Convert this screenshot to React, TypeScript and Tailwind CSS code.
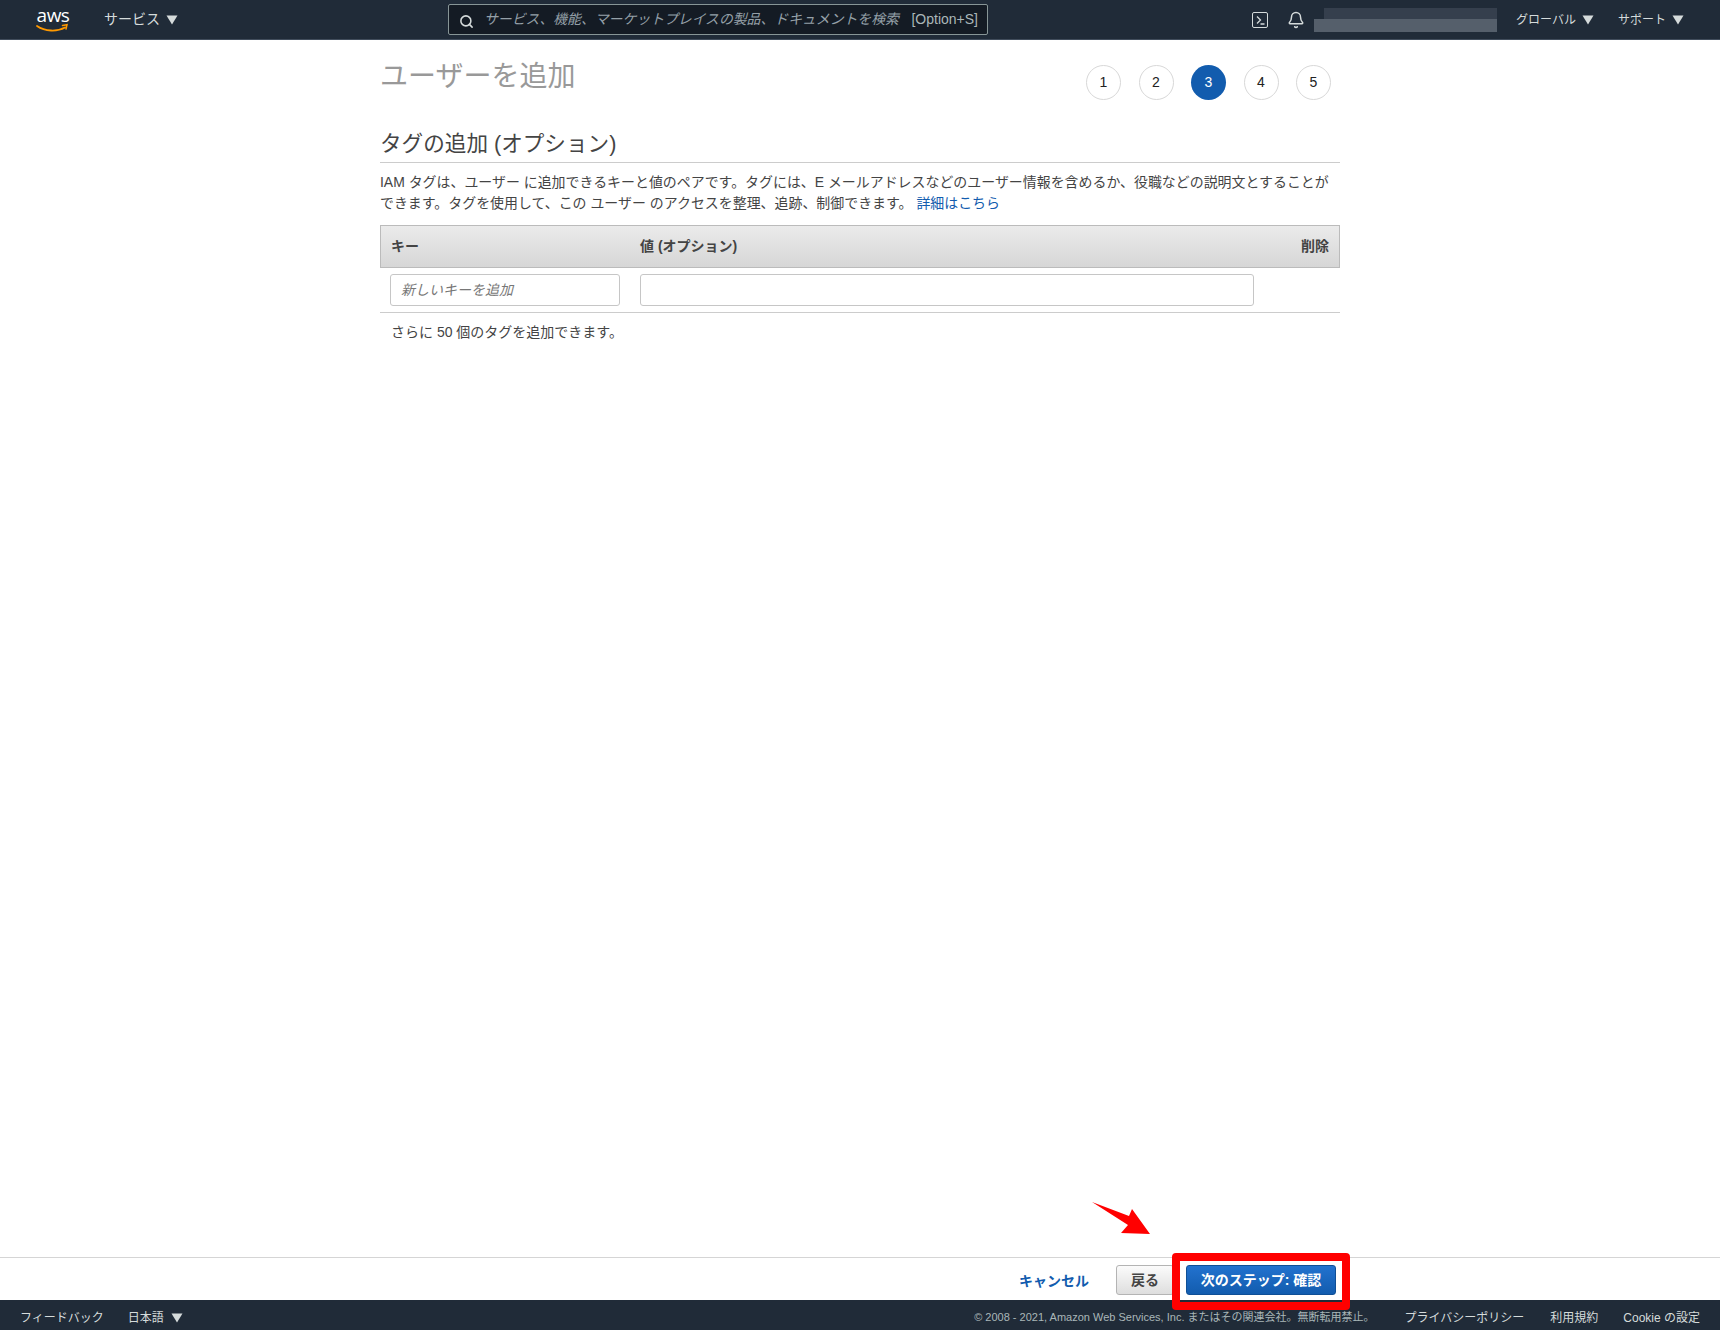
import { Search, Bell } from 'lucide-react';

const FONT = "font-['Liberation_Sans','Noto_Sans_CJK_JP',sans-serif]";

function Caret({ className = '' }: { className?: string }) {
  return (
    <svg className={className} width="12" height="10" viewBox="0 0 12 10">
      <path d="M0.500 0.500h11L6 9.500z" fill="#d5dbdb" />
    </svg>
  );
}

function AwsLogo() {
  return (
    <div className="relative flex h-[28px] w-[34px] flex-col items-center">
      <span className="text-[19px] leading-[19px] tracking-[-0.5px] text-white font-['Open_Sans',sans-serif]">aws</span>
      <svg className="absolute left-0 top-[16px]" width="34" height="12" viewBox="0 0 34 12">
        <path d="M1 4c8 5.500 20 6 28 1.500" fill="none" stroke="#f90" strokeWidth="1.800" strokeLinecap="round" />
        <path d="M26.500 3.500l4.500-.8-1 4.300" fill="none" stroke="#f90" strokeWidth="1.500" strokeLinecap="round" />
      </svg>
    </div>
  );
}

function TopNav() {
  return (
    <header className="flex h-[40px] shrink-0 items-center border-b border-[#414d5c] bg-[#202b38] text-[14px] text-[#d5dbdb]">
      <div className="ml-[36px] mr-[34px] flex items-center">
        <AwsLogo />
      </div>
      <div className="flex w-[74px] items-center gap-[6px]">
        <span className="whitespace-nowrap">サービス</span>
        <Caret className="shrink-0" />
      </div>
      <div className="ml-[270px] flex h-[31px] w-[540px] items-center rounded-[2px] border border-[#879596] bg-[#141b24] pl-[10px] pr-[9px]">
        <Search size={15} strokeWidth={2.500} className="mt-[3px] text-[#d5dbdb]" />
        <span className="ml-[10px] whitespace-nowrap text-[13.850px] italic text-[#95a0a8]">サービス、機能、マーケットプレイスの製品、ドキュメントを検索</span>
        <span className="ml-auto text-[14px] text-[#aab7b8]">[Option+S]</span>
      </div>
      <div className="ml-[264px] flex h-[16px] w-[16px] items-center justify-center rounded-[2px] border-[1.500px] border-[#d5dbdb]">
        <svg width="10" height="10" viewBox="0 0 10 10">
          <path d="M2 1.500l3.500 3.500L2 8.500M5.500 9h4" fill="none" stroke="#d5dbdb" strokeWidth="1.300" />
        </svg>
      </div>
      <Bell size={18} strokeWidth={2} className="ml-[19px] text-[#d5dbdb]" />
      <div className="relative ml-[9px] h-[24px] w-[183px]">
        <div className="absolute left-[10px] top-0 h-[11px] w-[173px] bg-[#353f4d]" />
        <div className="absolute bottom-0 left-0 h-[13px] w-[183px] bg-[#555f6b]" />
      </div>
      <div className="ml-[19px] flex items-center gap-[6px]">
        <span className="text-[12px]">グローバル</span>
        <Caret />
      </div>
      <div className="ml-[24px] flex items-center gap-[6px]">
        <span className="text-[12px]">サポート</span>
        <Caret />
      </div>
    </header>
  );
}

function StepDots() {
  const steps = [1, 2, 3, 4, 5];
  return (
    <div className="mr-[9px] mt-[25px] flex gap-[17.500px]">
      {steps.map((step) => (
        <div
          key={step}
          className={
            step === 3
              ? 'flex h-[35px] w-[35px] items-center justify-center rounded-full bg-[#125cae] text-[14px] text-white'
              : 'flex h-[35px] w-[35px] items-center justify-center rounded-full border border-[#d8d8d8] bg-white text-[14px] text-[#222]'
          }
        >
          {step}
        </div>
      ))}
    </div>
  );
}

function TagsTable() {
  return (
    <div>
      <div className="flex h-[43px] items-center border border-[#bbb] bg-gradient-to-b from-[#ebebeb] to-[#d6d6d6] text-[14px] font-bold text-[#444]">
        <span className="ml-[10px] w-[249px]">キー</span>
        <span>値 (オプション)</span>
        <span className="ml-auto mr-[10px]">削除</span>
      </div>
      <div className="flex gap-[20px] border-b border-[#ccc] py-[6px] pl-[10px]">
        <input
          readOnly
          placeholder="新しいキーを追加"
          className="h-[32px] w-[230px] rounded-[3px] border border-[#c6c6c6] px-[10px] text-[14px] placeholder:italic placeholder:text-[#777]"
        />
        <input readOnly className="h-[32px] w-[614px] rounded-[3px] border border-[#c6c6c6]" />
      </div>
      <p className="ml-[11px] mt-[9px] text-[14px] leading-[20px] text-[#444]">さらに 50 個のタグを追加できます。</p>
    </div>
  );
}

function ActionBar() {
  return (
    <div className="relative flex h-[43px] shrink-0 items-start justify-end border-t border-[#d5d5d5] bg-white pr-[384px] pt-[7px] text-[14px] font-bold">
      <a className="mr-[27px] mt-[6px] text-[#125cae]">キャンセル</a>
      <button className="h-[30px] w-[58px] rounded-[3px] border border-[#b4b4b4] bg-gradient-to-b from-[#fbfbfb] to-[#dedede] text-[#444]">戻る</button>
      <button className="ml-[12px] h-[30px] w-[150px] rounded-[3px] border border-[#0f4f96] bg-gradient-to-b from-[#2272cf] to-[#125cae] text-white">
        次のステップ: 確認
      </button>
      {/* red box and arrow sit on top of the screenshot */}
      <div className="pointer-events-none absolute left-[1172px] top-[-5px] z-10 h-[57px] w-[178px] rounded-[4px] border-[8px] border-[#f00]" />
      <svg className="pointer-events-none absolute left-[1092px] top-[-56px]" width="60" height="34" viewBox="0 0 60 34">
        <path d="M0 0L37 14L40 7L58 32L29 31L36 23Z" fill="#f00" />
      </svg>
    </div>
  );
}

function Footer() {
  return (
    <footer className="flex h-[30px] shrink-0 items-center bg-[#202b38] pt-[5px] text-[12px] text-[#d5dbdb]">
      <span className="ml-[20px]">フィードバック</span>
      <span className="ml-[24px]">日本語</span>
      <Caret className="ml-[7px]" />
      <span className="ml-auto text-[11px] text-[#aab7b8]">© 2008 - 2021, Amazon Web Services, Inc. またはその関連会社。無断転用禁止。</span>
      <span className="ml-[30px]">プライバシーポリシー</span>
      <span className="ml-[26px]">利用規約</span>
      <span className="ml-[25px] mr-[20px]">Cookie の設定</span>
    </footer>
  );
}

export default function App() {
  return (
    <div className={`flex h-[1330px] flex-col overflow-hidden bg-white ${FONT}`}>
      <TopNav />
      <main className="mx-auto w-[960px] flex-1">
        <div className="flex justify-between">
          <h1 className="mt-[17px] text-[28px] leading-[40px] text-[#999]">ユーザーを追加</h1>
          <StepDots />
        </div>
        <h2 className="mt-[29px] border-b border-[#ccc] pb-[3px] text-[21.600px] leading-[30px] text-[#444]">タグの追加 (オプション)</h2>
        <p className="mb-[11px] mt-[9px] text-[13.950px] leading-[21px] text-[#444]">
          IAM タグは、ユーザー に追加できるキーと値のペアです。タグには、E メールアドレスなどのユーザー情報を含めるか、役職などの説明文とすることができます。タグを使用して、この ユーザー のアクセスを整理、追跡、制御できます。{' '}
          <a className="text-[#125cae]">詳細はこちら</a>
        </p>
        <TagsTable />
      </main>
      <ActionBar />
      <Footer />
    </div>
  );
}
